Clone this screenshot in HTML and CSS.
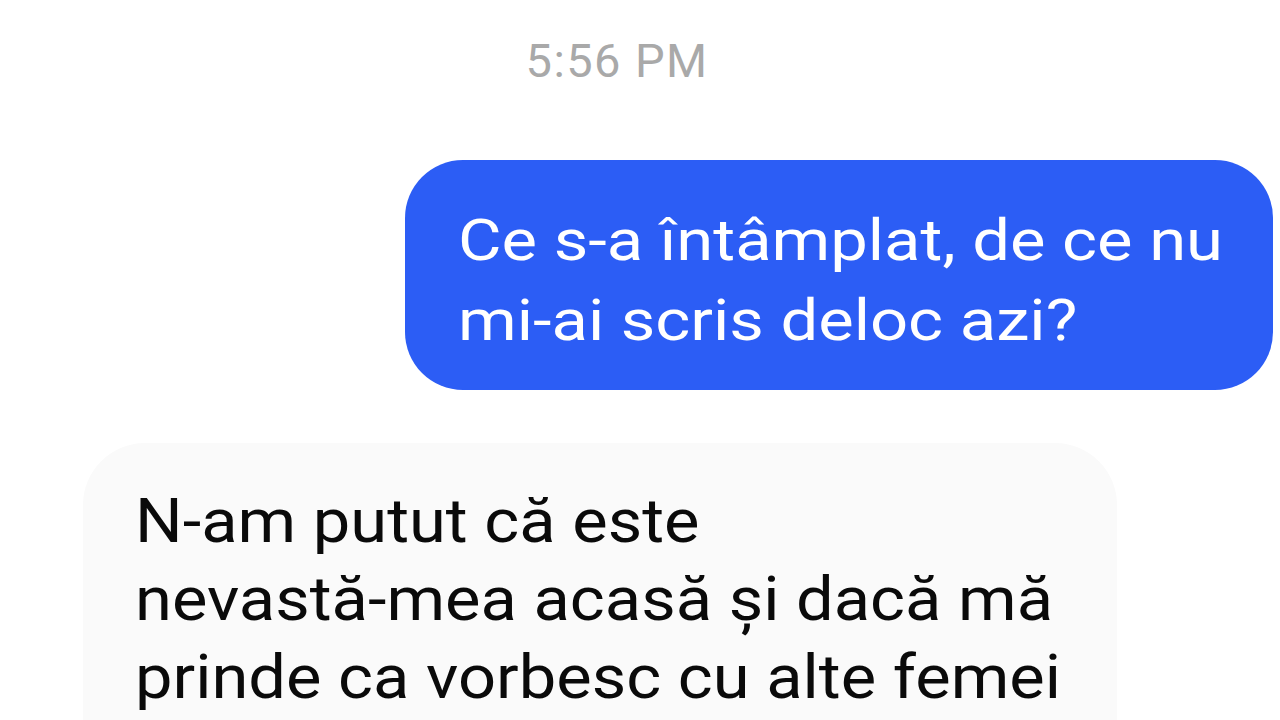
FILE: index.html
```html
<!DOCTYPE html>
<html lang="ro">
<head>
    <meta charset="UTF-8" />
    <meta name="viewport" content="width=device-width, initial-scale=1" />
    <title>Conversație</title>
    <link rel="stylesheet" href="styles.css">
</head>
<body>
    <div class="chat">
        <div class="timestamp">5:56 PM</div>

        <div class="message sent">
            <p>Ce s-a întâmplat, de ce nu<br>mi-ai scris deloc azi?</p>
        </div>

        <div class="message received">
            <p>N-am putut că este<br>nevastă-mea acasă și dacă mă<br>prinde ca vorbesc cu alte femei</p>
        </div>
    </div>
</body>
</html>
```

FILE: styles.css
```css
html, body {
    height: 100%;
}
body {
    margin: 0;
    background-color: #ffffff;
    font-family: Roboto, 'Liberation Sans', sans-serif;
    overflow: hidden;
}
.chat {
    display: flex;
    flex-direction: column;
    padding-top: 33px;
}
.timestamp {
    text-align: center;
    padding-right: 46px;
    font-size: 47px;
    line-height: 56px;
    letter-spacing: 1.4px;
    color: #a9a9a9;
}
.message p {
    display: inline-block;
    margin: 0;
    white-space: nowrap;
    transform-origin: left top;
}
/* Outgoing bubble */
.sent {
    align-self: flex-end;
    width: 815px;
    margin: 71px 7px 0 0;
    padding: 40px 0 30px 53px;
    background-color: #2c5df5;
    border-radius: 58px;
    color: #ffffff;
    font-size: 58px;
    line-height: 80px;
}
.sent p {
    transform: scaleX(1.154);
}
/* Incoming bubble */
.received {
    align-self: flex-start;
    width: 982px;
    margin: 53px 0 0 83px;
    padding: 39px 0 120px 52px;
    background-color: #fafafa;
    border-radius: 62px;
    color: #0a0a0a;
    font-size: 61px;
    line-height: 78px;
}
.received p {
    transform: scaleX(1.096);
}
```
